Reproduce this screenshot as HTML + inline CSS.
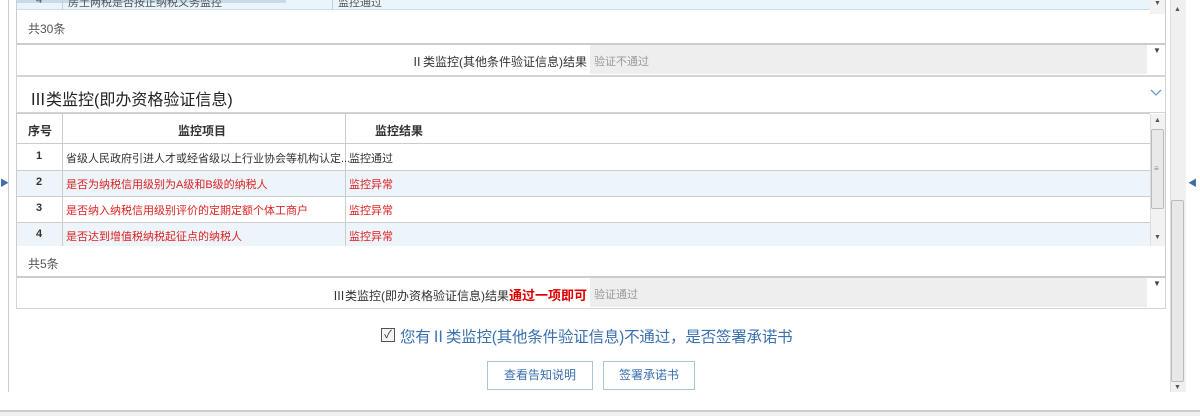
<!DOCTYPE html>
<html><head><meta charset="utf-8"><style>
*{margin:0;padding:0;box-sizing:border-box}
body{width:1200px;height:416px;background:#fff;font-family:"Liberation Sans","Noto Sans CJK SC",sans-serif;position:relative;overflow:hidden;color:#333;font-size:12px}
.a{position:absolute}
.bl{border:1px solid #d4d4d4}
.red{color:#d22}
</style></head><body>
<div class="a" style="left:8px;top:0;width:1px;height:392px;background:#ccc"></div>
<div class="a" style="left:0;top:410px;width:1200px;height:2px;background:#ccc"></div>
<div class="a" style="left:0;top:412px;width:1200px;height:4px;background:#f0f0f0"></div>
<div class="a" style="left:1170px;top:0;width:16px;height:392px;background:#f0f0f0;border-left:1px solid #ddd"></div>
<div class="a" style="left:1174px;top:6px;font-size:7px;color:#555">▲</div>
<div class="a" style="left:1171px;top:200px;width:13px;height:182px;background:#e8e8e8;border:1px solid #bbb;border-radius:2px"></div>
<div class="a" style="left:1174px;top:384px;font-size:7px;color:#555">▼</div>
<div class="a" style="left:1188px;top:176px;font-size:9px;color:#3a6ea5">◀</div>
<div class="a" style="left:0px;top:176px;font-size:9px;color:#3a6ea5">▶</div>

<div class="a" style="left:16px;top:0;width:1150px;height:10px;background:#eaf4fb;border-bottom:1px solid #cde"></div>
<div class="a" style="left:16px;top:0;width:270px;height:3px;background:#c6dcec"></div>
<div class="a" style="left:62px;top:0;width:1px;height:10px;background:#ccc"></div>
<div class="a" style="left:332px;top:0;width:1px;height:10px;background:#ccc"></div>
<div class="a" style="left:36px;top:-6px;font-size:11px;color:#555">4</div>
<div class="a" style="left:68px;top:-6px;font-size:11px;color:#555">房土两税是否按正纳税义务监控</div>
<div class="a" style="left:338px;top:-6px;font-size:11px;color:#555">监控通过</div>
<div class="a" style="left:1150px;top:0;width:15px;height:14px;background:#f3f3f3;font-size:7px;color:#555;text-align:center">▼</div>
<div class="a" style="left:16px;top:0;width:1px;height:44px;background:#ccc"></div>
<div class="a" style="left:1165px;top:0;width:1px;height:44px;background:#ccc"></div>
<div class="a" style="left:28px;top:20px;color:#555">共30条</div>

<div class="a bl" style="left:16px;top:43px;width:1150px;height:33px;border-top:2px solid #ccc"></div>
<div class="a" style="left:400px;top:53px;width:187px;text-align:right;color:#333">Ⅱ类监控(其他条件验证信息)结果</div>
<div class="a" style="left:590px;top:45px;width:557px;height:29px;background:#eee"></div>
<div class="a" style="left:594px;top:53px;color:#999;font-size:11px">验证不通过</div>
<div class="a" style="left:1153px;top:46px;font-size:8px;color:#444">▼</div>

<div class="a bl" style="left:16px;top:76px;width:1150px;height:37px"></div>
<div class="a" style="left:30px;top:86px;font-size:16px;color:#222">Ⅲ类监控(即办资格验证信息)</div>
<svg class="a" style="left:1150px;top:89px" width="12" height="8"><path d="M1 1 L6 6 L11 1" stroke="#6a9cc8" stroke-width="1.3" fill="none"/></svg>

<div class="a" style="left:16px;top:113px;width:1150px;height:133px;border-left:1px solid #ccc;border-right:1px solid #ccc"></div>
<div class="a" style="left:17px;top:113px;width:1133px;height:31px;border-top:1px solid #ccc;border-bottom:1px solid #ccc"></div>
<div class="a" style="left:28px;top:122px;font-weight:bold">序号</div>
<div class="a" style="left:178px;top:122px;font-weight:bold">监控项目</div>
<div class="a" style="left:375px;top:122px;font-weight:bold">监控结果</div>
<div class="a" style="left:17px;top:170px;width:1133px;height:26px;background:#edf5fb"></div>
<div class="a" style="left:17px;top:222px;width:1133px;height:24px;background:#edf5fb"></div>
<div class="a" style="left:17px;top:170px;width:1133px;height:1px;background:#ccc"></div>
<div class="a" style="left:17px;top:196px;width:1133px;height:1px;background:#ccc"></div>
<div class="a" style="left:17px;top:222px;width:1133px;height:1px;background:#ccc"></div>
<div class="a" style="left:62px;top:113px;width:1px;height:133px;background:#ccc"></div>
<div class="a" style="left:345px;top:113px;width:1px;height:133px;background:#ccc"></div>
<div class="a" style="left:36px;top:150px;font-weight:bold;font-size:11px">1</div>
<div class="a" style="left:66px;top:150px;font-size:11px">省级人民政府引进人才或经省级以上行业协会等机构认定...</div>
<div class="a" style="left:349px;top:150px;font-size:11px">监控通过</div>
<div class="a" style="left:36px;top:176px;font-weight:bold;font-size:11px">2</div>
<div class="a red" style="left:66px;top:176px;font-size:11px">是否为纳税信用级别为A级和B级的纳税人</div>
<div class="a red" style="left:349px;top:176px;font-size:11px">监控异常</div>
<div class="a" style="left:36px;top:202px;font-weight:bold;font-size:11px">3</div>
<div class="a red" style="left:66px;top:202px;font-size:11px">是否纳入纳税信用级别评价的定期定额个体工商户</div>
<div class="a red" style="left:349px;top:202px;font-size:11px">监控异常</div>
<div class="a" style="left:36px;top:228px;font-weight:bold;font-size:11px">4</div>
<div class="a red" style="left:66px;top:228px;font-size:11px">是否达到增值税纳税起征点的纳税人</div>
<div class="a red" style="left:349px;top:228px;font-size:11px">监控异常</div>
<div class="a" style="left:1150px;top:114px;width:15px;height:132px;background:#f2f2f2;border-left:1px solid #ddd"></div>
<div class="a" style="left:1154px;top:117px;font-size:7px;color:#555">▲</div>
<div class="a" style="left:1151px;top:129px;width:13px;height:80px;background:#e9e9e9;border:1px solid #bbb;border-radius:2px"></div>
<div class="a" style="left:1154px;top:164px;font-size:8px;color:#888">≡</div>
<div class="a" style="left:1154px;top:234px;font-size:7px;color:#555">▼</div>
<div class="a" style="left:16px;top:246px;width:1px;height:31px;background:#ccc"></div>
<div class="a" style="left:1165px;top:246px;width:1px;height:31px;background:#ccc"></div>
<div class="a" style="left:28px;top:255px;color:#555">共5条</div>

<div class="a bl" style="left:16px;top:276px;width:1150px;height:33px;border-top:2px solid #ccc"></div>
<div class="a" style="left:300px;top:285px;width:287px;text-align:right;color:#333">Ⅲ类监控(即办资格验证信息)结果<b style="color:#d00;font-size:13px">通过一项即可</b></div>
<div class="a" style="left:590px;top:278px;width:557px;height:29px;background:#eee"></div>
<div class="a" style="left:594px;top:286px;color:#999;font-size:11px">验证通过</div>
<div class="a" style="left:1153px;top:279px;font-size:8px;color:#444">▼</div>

<div class="a" style="left:381px;top:328px;width:14px;height:14px;border:1px solid #555;background:#f4f4f4;font-size:11px;line-height:12px;text-align:center;color:#333">✓</div>
<div class="a" style="left:400px;top:325px;font-size:15.5px;color:#3a70b0;letter-spacing:-0.2px">您有Ⅱ类监控(其他条件验证信息)不通过，是否签署承诺书</div>

<div class="a" style="left:487px;top:361px;width:106px;height:29px;border:1px solid #aac4dc;color:#3a70b0;text-align:center;line-height:27px">查看告知说明</div>
<div class="a" style="left:603px;top:361px;width:92px;height:29px;border:1px solid #aac4dc;color:#3a70b0;text-align:center;line-height:27px">签署承诺书</div>
</body></html>
